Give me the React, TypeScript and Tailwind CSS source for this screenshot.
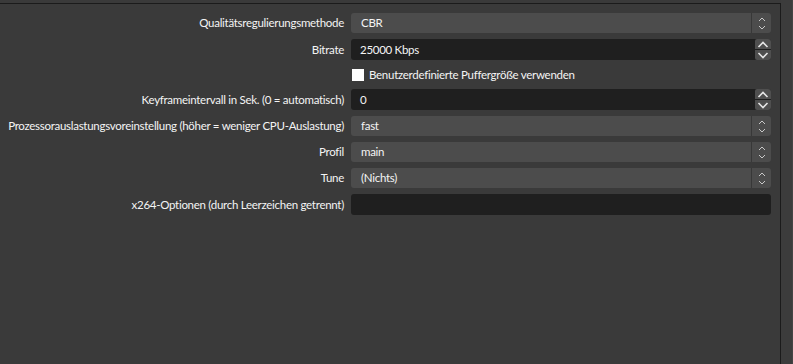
import type { ReactNode } from 'react';

const font = { fontFamily: 'Lato, "Liberation Sans", sans-serif' };
const txt = 'text-[11.5px] tracking-[-0.28px] text-[#f4f4f4]';

function ComboArrows() {
  return (
    <div className="flex w-[20px] flex-col items-center justify-center gap-[3px] border-l border-[#383838]">
      <svg width="8" height="5" viewBox="0 0 8 5" fill="none">
        <path d="M1 4 L4 1 L7 4" stroke="#c8c8c8" strokeWidth="1" />
      </svg>
      <svg width="8" height="5" viewBox="0 0 8 5" fill="none">
        <path d="M1 1 L4 4 L7 1" stroke="#c8c8c8" strokeWidth="1" />
      </svg>
    </div>
  );
}

function Combo({ value }: { value: string }) {
  return (
    <div className="flex h-[20px] flex-1 rounded-[3px] bg-[#4c4c4c]">
      <div className={`flex flex-1 items-center pl-[10px] ${txt}`}>{value}</div>
      <ComboArrows />
    </div>
  );
}

function Spin({ value }: { value: string }) {
  return (
    <div className="flex h-[21px] flex-1 rounded-[3px] bg-[#1f1f1f]">
      <div className={`flex flex-1 items-center pl-[9px] ${txt}`}>{value}</div>
      <div className="flex w-[16px] flex-col gap-px">
        <div className="flex flex-1 items-center justify-center rounded-tr-[3px] rounded-tl-[2px] bg-[#4f4f4f]">
          <svg width="12" height="7" viewBox="0 0 12 7" fill="none">
            <path d="M1.5 6 L6 1.5 L10.5 6" stroke="#e6e6e6" strokeWidth="1.6" />
          </svg>
        </div>
        <div className="flex flex-1 items-center justify-center rounded-br-[3px] rounded-bl-[2px] bg-[#4f4f4f]">
          <svg width="12" height="7" viewBox="0 0 12 7" fill="none">
            <path d="M1.5 1 L6 5.5 L10.5 1" stroke="#e6e6e6" strokeWidth="1.6" />
          </svg>
        </div>
      </div>
    </div>
  );
}

function Row({ label, children }: { label?: string; children: ReactNode }) {
  return (
    <div className="flex items-center gap-[7px]">
      <div className={`flex w-[340px] shrink-0 justify-end whitespace-nowrap ${txt}`}>{label}</div>
      {children}
    </div>
  );
}

export default function App() {
  return (
    <div className="flex h-[364px] w-[793px] bg-[#3a3a3a]" style={font}>
      <div className="mt-[3px] flex w-[781px] flex-col gap-[6px] border-t border-r border-[#1b1b1b] pt-[9px] pl-[4px] pr-[9px]">
        <Row label="Qualitätsregulierungsmethode">
          <Combo value="CBR" />
        </Row>
        <Row label="Bitrate">
          <Spin value="25000 Kbps" />
        </Row>
        <Row>
          <div className="flex h-[17px] items-center gap-[5px] pl-px">
            <div className="h-[12px] w-[12px] bg-white" />
            <span className={txt}>Benutzerdefinierte Puffergröße verwenden</span>
          </div>
        </Row>
        <Row label="Keyframeintervall in Sek. (0 = automatisch)">
          <Spin value="0" />
        </Row>
        <Row label="Prozessorauslastungsvoreinstellung (höher = weniger CPU-Auslastung)">
          <Combo value="fast" />
        </Row>
        <Row label="Profil">
          <Combo value="main" />
        </Row>
        <Row label="Tune">
          <Combo value="(Nichts)" />
        </Row>
        <Row label="x264-Optionen (durch Leerzeichen getrennt)">
          <div className="h-[21px] flex-1 rounded-[3px] bg-[#1f1f1f]" />
        </Row>
      </div>
      <div className="flex-1 border-r border-[#444444] bg-[#3c3c3c]" />
    </div>
  );
}
